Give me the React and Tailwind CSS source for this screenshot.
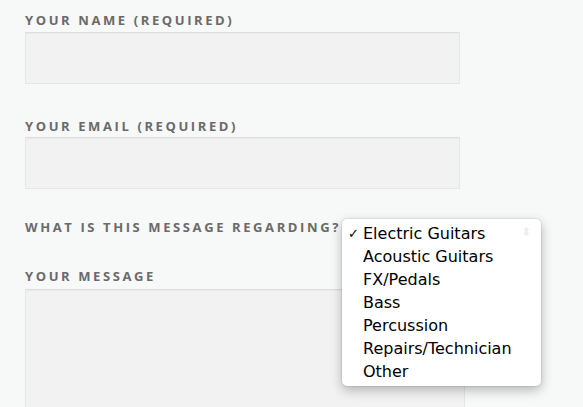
import React from "react";

const labelCls =
  "block text-[13px] leading-[20px] font-bold tracking-[0.2em] text-[#6a6a6a] uppercase";
const fieldCls =
  "block bg-[#f2f2f2] border border-[#e6e6e6] border-t-[#dedede] shadow-[inset_0_1px_1px_rgba(0,0,0,0.03)]";

const options = [
  "Electric Guitars",
  "Acoustic Guitars",
  "FX/Pedals",
  "Bass",
  "Percussion",
  "Repairs/Technician",
  "Other",
];

function Field({ label, children, gap }) {
  return (
    <div className={`flex flex-col ${gap}`}>
      <label className={labelCls}>{label}</label>
      {children}
    </div>
  );
}

export default function App() {
  return (
    <div
      className="relative h-[407px] w-[583px] overflow-hidden bg-[#f7f8f8] pl-[25px] pt-[10px]"
      style={{ fontFamily: "'Open Sans', sans-serif" }}
    >
      <form className="flex flex-col">
        <Field label="Your Name (required)" gap="gap-[2px]">
          <div className={`${fieldCls} h-[52px] w-[435px]`} />
        </Field>

        <div className="mt-[32px]">
          <Field label="Your Email (required)" gap="gap-[1px]">
            <div className={`${fieldCls} h-[52px] w-[435px]`} />
          </Field>
        </div>

        <div className="mt-[28px]">
          <Field label="What is this message regarding?" gap="gap-0" />
        </div>

        <div className="mt-[29px]">
          <Field label="Your Message" gap="gap-[3px]">
            <div className={`${fieldCls} h-[160px] w-[440px]`} />
          </Field>
        </div>
      </form>

      {/* native select popup, open over the form */}
      <div
        className="absolute left-[342px] top-[219px] flex w-[199px] flex-col rounded-[5px] bg-white py-[3px] shadow-[0_4px_12px_rgba(0,0,0,0.28),0_0_0_1px_rgba(0,0,0,0.06)]"
        style={{ fontFamily: "'DejaVu Sans', sans-serif" }}
      >
        <span className="absolute right-[10px] top-[6px] text-[12px] leading-[14px] text-[#ededed]">⬍</span>
        {options.map((o, i) => (
          <div key={o} className="flex h-[23px] items-center whitespace-nowrap text-[16px] leading-[23px] text-black">
            <span className="w-[21px] pl-[6px] text-[13px]">{i === 0 ? "✓" : ""}</span>
            {o}
          </div>
        ))}
      </div>
    </div>
  );
}
